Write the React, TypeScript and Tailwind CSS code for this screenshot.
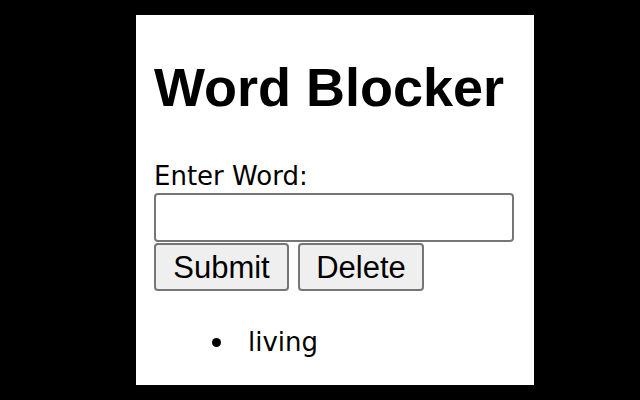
import { useState } from "react";

export default function App() {
  const [word, setWord] = useState("");
  const [words, setWords] = useState<string[]>(["living"]);

  const handleSubmit = () => {
    const w = word.trim();
    if (!w) return;
    setWords((prev) => (prev.includes(w) ? prev : [...prev, w]));
    setWord("");
  };

  const handleDelete = () => {
    const w = word.trim();
    setWords((prev) => prev.filter((x) => x !== w));
    setWord("");
  };

  return (
    <div className="w-[640px] h-[400px] bg-black pt-[15px] pl-[136px]">
      <div className="w-[398px] h-[370px] bg-white pl-[18px] pt-[41px]">
        <h1 className="font-['Liberation_Sans',Arial,sans-serif] font-bold text-[54px] leading-[62px] text-black">
          Word Blocker
        </h1>

        <label className="block mt-[43px] font-['DejaVu_Sans',sans-serif] text-[26px] leading-[30px] text-black">
          Enter Word:
        </label>
        <input
          type="text"
          value={word}
          onChange={(e) => setWord(e.target.value)}
          className="block mt-[2px] w-[360px] h-[49px] bg-white border-2 border-[#767676] rounded-[4px] px-2 text-[26px] font-['DejaVu_Sans',sans-serif] outline-none"
        />

        {/* Actions */}
        <div className="flex gap-[9px] mt-[1px]">
          <button
            onClick={handleSubmit}
            className="w-[135px] h-[48px] bg-[#efefef] border-2 border-[#767676] rounded-[4px] font-['Liberation_Sans',Arial,sans-serif] text-[31px] leading-none text-black"
          >
            Submit
          </button>
          <button
            onClick={handleDelete}
            className="w-[126px] h-[48px] bg-[#efefef] border-2 border-[#767676] rounded-[4px] font-['Liberation_Sans',Arial,sans-serif] text-[31px] leading-none text-black"
          >
            Delete
          </button>
        </div>

        {/* Blocked words */}
        <ul className="mt-[36px]">
          {words.map((w) => (
            <li key={w} className="flex items-center h-[30px] pl-[58px]">
              <span className="w-[9px] h-[9px] rounded-full bg-black mr-[27px]" />
              <span className="font-['DejaVu_Sans',sans-serif] text-[26px] leading-[30px] text-black">
                {w}
              </span>
            </li>
          ))}
        </ul>
      </div>
    </div>
  );
}
